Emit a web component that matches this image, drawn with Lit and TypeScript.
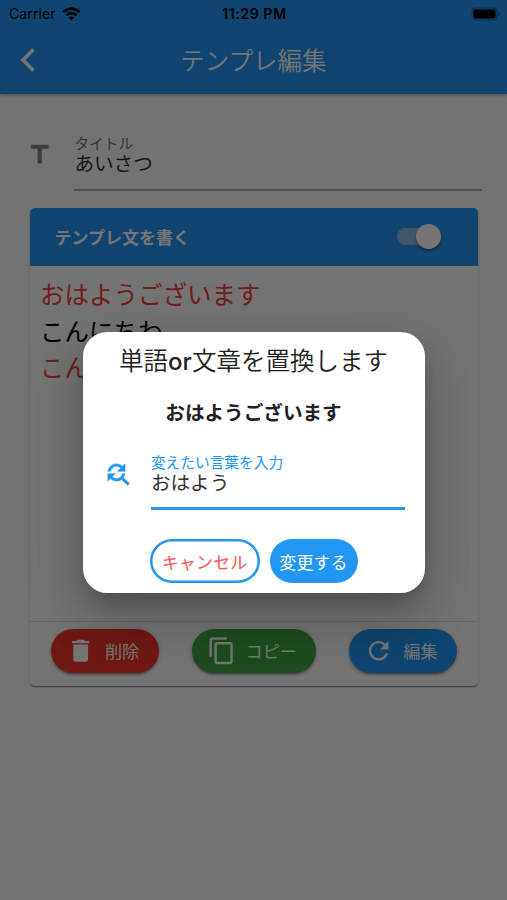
import { LitElement, html, css, svg } from "lit";
import { customElement, property } from "lit/decorators.js";

const icons: Record<string, string> = {
  title: "M5 4v3h5.500v12h3V7H19V4z",
  trash: "M6 19c0 1.100.9 2 2 2h8c1.100 0 2-.9 2-2V7H6v12zM19 4h-3.500l-1-1h-5l-1 1H5v2h14V4z",
  copy: "M16 1H4c-1.100 0-2 .9-2 2v14h2V3h12V1zm3 4H8c-1.100 0-2 .9-2 2v14c0 1.100.9 2 2 2h11c1.100 0 2-.9 2-2V7c0-1.100-.9-2-2-2zm0 16H8V7h11v14z",
  refresh:
    "M17.650 6.350C16.200 4.900 14.210 4 12 4c-4.420 0-7.990 3.580-7.990 8s3.570 8 7.990 8c3.730 0 6.840-2.550 7.730-6h-2.080c-.82 2.330-3.040 4-5.650 4-3.310 0-6-2.690-6-6s2.690-6 6-6c1.660 0 3.140.69 4.220 1.780L13 11h7V4l-2.350 2.350z",
  replace:
    "M11 6c1.380 0 2.630.56 3.540 1.460L12 10h6V4l-2.050 2.050C14.680 4.780 12.930 4 11 4c-3.530 0-6.430 2.610-6.920 6H6.100c.46-2.280 2.480-4 4.900-4zm5.640 9.140c.66-.9 1.120-1.970 1.280-3.140H15.900c-.46 2.280-2.480 4-4.900 4-1.380 0-2.630-.56-3.540-1.460L10 12H4v6l2.050-2.050C7.320 17.220 9.070 18 11 18c1.550 0 2.980-.51 4.140-1.360L20 21.490 21.490 20l-4.850-4.860z",
};

@customElement("ui-icon")
class UiIcon extends LitElement {
  @property() name = "";
  static styles = css`
    :host { display: block; flex: none; width: 24px; height: 24px; }
    svg {
      display: block; width: 100%; height: 100%; overflow: visible;
      fill: currentColor; stroke: currentColor; stroke-width: var(--icon-weight, 0);
    }
  `;
  render() {
    return html`<svg viewBox="0 0 24 24">${svg`<path d=${icons[this.name] ?? ""}></path>`}</svg>`;
  }
}

@customElement("action-button")
class ActionButton extends LitElement {
  @property() icon = "";
  @property() label = "";
  static styles = css`
    :host {
      display: flex; align-items: center; box-sizing: border-box; height: 44px;
      padding: 0 19.500px 0 15px; border-radius: 22px; gap: 9.500px; color: #fff;
      box-shadow: 0 3px 2px -2px rgba(0,0,0,.3), 0 2px 3px rgba(0,0,0,.2), 0 1px 6px rgba(0,0,0,.14);
    }
    ui-icon { width: 29.400px; height: 29.400px; }
    .label { font-size: 17.100px; line-height: 24px; padding-top: 1px; white-space: nowrap; }
  `;
  render() {
    return html`<ui-icon name=${this.icon}></ui-icon><span class="label">${this.label}</span>`;
  }
}

@customElement("app-root")
class AppRoot extends LitElement {
  static styles = css`
    :host {
      display: block; position: relative; width: 100%; height: 900px; overflow: hidden;
      background: #fafafa; color: #000;
      font-family: Inter, "Noto Sans CJK JP", sans-serif;
    }
    .bar { height: 94px; background: #2196f3; box-shadow: 0 1px 3px rgba(0,0,0,.35); }
    .status {
      display: grid; grid-template-columns: 1fr auto 1fr; align-items: center;
      height: 27px; padding: 0 7px 0 9px; font-size: 14px;
    }
    .carrier { display: flex; align-items: center; gap: 6px; letter-spacing: .1px; }
    .wifi { width: 19px; height: 14px; }
    .time { font-weight: 600; font-size: 14.300px; letter-spacing: .45px; }
    .battery { justify-self: end; width: 29px; height: 14px; }
    .nav { display: grid; grid-template-columns: 1fr auto 1fr; align-items: center; height: 67px; color: #fff; }
    .back { width: 16px; height: 26px; margin: -2px 0 0 20px; }
    .heading { font-size: 24.500px; font-weight: 350; line-height: 36px; }
    .field { display: flex; padding: 41px 25px 0 25px; height: 114px; box-sizing: border-box; }
    .field ui-icon { width: 29.400px; height: 29.400px; color: #858585; margin-top: 5px; --icon-weight: .4px; }
    .entry { box-sizing: border-box; flex: 1; margin-left: 20px; height: 56px; border-bottom: 2px solid #b0b0b0; }
    .label { font-size: 14.700px; line-height: 19px; color: #757575; }
    .value { font-size: 19.600px; line-height: 20px; color: #333; }
    .card {
      margin: 0 29px 0 30px; height: 478px; border-radius: 5px; background: #fff; overflow: hidden;
      display: flex; flex-direction: column;
      box-shadow: 0 2px 1px -1px rgba(0,0,0,.25), 0 1px 2px rgba(0,0,0,.3);
    }
    .cardhead {
      display: flex; align-items: center; justify-content: space-between; height: 58px; box-sizing: border-box;
      padding: 0 37px 2px 24.500px; background: #2196f3; color: #fff; font-size: 17px; font-weight: 700;
    }
    .switch { display: flex; align-items: center; justify-content: flex-end; width: 44px; height: 17px; border-radius: 9px; background: #90bfe6; }
    .knob { width: 25px; height: 25px; border-radius: 50%; background: #fff; box-shadow: 0 2px 3px rgba(0,0,0,.4); }
    .lines { flex: 1; padding: 11px 10px 0; font-size: 24.500px; line-height: 36.600px; }
    .red { color: #f44336; }
    .foot { display: flex; justify-content: space-between; height: 65px; padding: 7px 21px 0; border-top: 1px solid #dcdcdc; box-sizing: border-box; }
    .delete { background: #f5372b; }
    .copy { background: #3fa843; }
    .edit { background: #2196f3; }
    .scrim {
      position: absolute; inset: 0; display: flex; justify-content: center;
      align-items: flex-start; padding-top: 332px; box-sizing: border-box; background: rgba(0,0,0,.54);
    }
    .dialog {
      width: 342px; height: 261px; box-sizing: border-box; background: #fff; border-radius: 24.500px;
      padding: 11px 20px 0; color: #212121; display: flex; flex-direction: column; align-items: center;
      box-shadow: 0 13px 18px -8px rgba(0,0,0,.2), 0 29px 46px 4px rgba(0,0,0,.14), 0 11px 56px 10px rgba(0,0,0,.12);
    }
    .question { font-size: 24.500px; line-height: 37px; font-weight: 350; white-space: nowrap; }
    .latin { font-weight: 500; font-size: 24px; }
    .target { margin-top: 18px; font-size: 19.600px; line-height: 30px; font-weight: 700; }
    .replace { display: flex; align-self: stretch; margin-top: 26px; }
    .replace ui-icon { width: 29.400px; height: 29.400px; color: #2196f3; margin-top: 5px; --icon-weight: .5px; }
    .replace .entry { margin-left: 19px; height: 56px; border-bottom: 3px solid #2196f3; }
    .replace .label { color: #2196f3; }
    .buttons { display: flex; gap: 10px; margin-top: 29px; }
    .pill { display: flex; align-items: center; justify-content: center; box-sizing: border-box; height: 44px; border-radius: 22px; font-size: 17.100px; }
    .cancel { width: 110px; color: #ff5252; box-shadow: inset 0 0 0 2.500px #2196f3; }
    .confirm { width: 88px; background: #2196f3; color: #fff; }
  `;

  render() {
    return html`
      <header class="bar">
        <div class="status">
          <div class="carrier">
            <span>Carrier</span>
            <svg class="wifi" viewBox="0 0 19 14" fill="none" stroke="#000" stroke-width="2.500">
              <path d="M1.200 5.100Q9.500-1.900 17.800 5.100M4.300 8.300Q9.500 4.100 14.700 8.300"></path>
              <path d="M9.500 13.400L6.700 10.500Q9.500 8.300 12.300 10.500Z" fill="#000" stroke="none"></path>
            </svg>
          </div>
          <span class="time">11:29 PM</span>
          <svg class="battery" viewBox="0 0 29 14">
            <rect x="1" y="1" width="25" height="12" rx="3.500" fill="none" stroke="#000" stroke-opacity=".35"></rect>
            <rect x="2.500" y="2.500" width="22" height="9" rx="2"></rect>
            <path d="M27.300 5v4q1.400-.6 1.400-2t-1.400-2" opacity=".45"></path>
          </svg>
        </div>
        <div class="nav">
          <svg class="back" viewBox="0 0 16 26" fill="none" stroke="#fff" stroke-width="3.600">
            <path d="M13.500 2.500L3 13L13.500 23.500"></path>
          </svg>
          <span class="heading">テンプレ編集</span>
        </div>
      </header>
      <section class="field">
        <ui-icon name="title"></ui-icon>
        <div class="entry">
          <div class="label">タイトル</div>
          <div class="value">あいさつ</div>
        </div>
      </section>
      <section class="card">
        <div class="cardhead">
          <span>テンプレ文を書く</span>
          <div class="switch"><div class="knob"></div></div>
        </div>
        <div class="lines">
          <div class="red">おはようございます</div>
          <div>こんにちわ</div>
          <div class="red">こんばんわ</div>
        </div>
        <div class="foot">
          <action-button class="delete" icon="trash" label="削除"></action-button>
          <action-button class="copy" icon="copy" label="コピー"></action-button>
          <action-button class="edit" icon="refresh" label="編集"></action-button>
        </div>
      </section>
      <div class="scrim">
        <div class="dialog">
          <div class="question">単語<span class="latin">or</span>文章を置換します</div>
          <div class="target">おはようございます</div>
          <div class="replace">
            <ui-icon name="replace"></ui-icon>
            <div class="entry">
              <div class="label">変えたい言葉を入力</div>
              <div class="value">おはよう</div>
            </div>
          </div>
          <div class="buttons">
            <div class="pill cancel">キャンセル</div>
            <div class="pill confirm">変更する</div>
          </div>
        </div>
      </div>
    `;
  }
}
